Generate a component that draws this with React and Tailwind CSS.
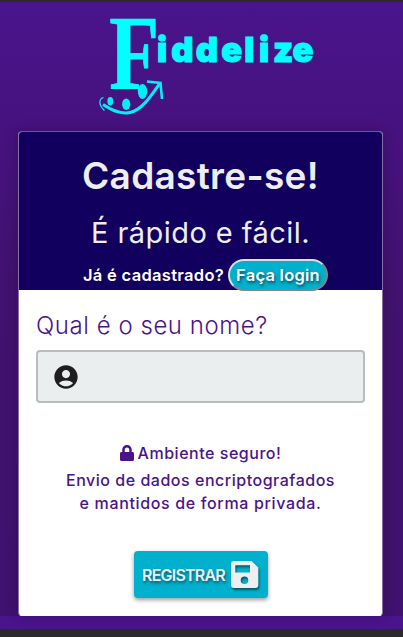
import React from 'react';
import { MdAccountCircle } from 'react-icons/md';
import { FaLock } from 'react-icons/fa';

function Logo() {
  return (
    <svg className="block h-[132px] w-full shrink-0 overflow-visible" viewBox="0 0 403 132" fill="#00ffff">
      <text
        transform="translate(109.3 89.4) scale(.77 1)"
        fontFamily="Liberation Serif"
        fontWeight="700"
        fontSize="106"
        stroke="#00ffff"
        strokeWidth=".8"
      >
        F
      </text>
      <text
        x="157 171.3 195.8 221.2 244.2 259 273 292.5"
        y="61.5"
        fontFamily="Inter, sans-serif"
        fontWeight="900"
        fontSize="34.5"
        stroke="#00ffff"
        strokeWidth="1"
      >
        iddelize
      </text>
      <g fill="#04eef5">
        <ellipse cx="110.3" cy="101.3" rx="2.9" ry="4.2" />
        <ellipse cx="126.2" cy="104.2" rx="4.1" ry="5.8" />
        <ellipse cx="142.5" cy="91.5" rx="4.7" ry="7.4" />
        <path d="M103 104.5C113 111 121 114.5 130 112.5C142 110 151 96 160 83" fill="none" stroke="#04eef5" strokeWidth="3" />
        <path d="M147 81.5L160.5 83L162 99" fill="none" stroke="#04eef5" strokeWidth="2.6" />
        <path d="M103.5 97.5C98.5 99 98.5 105 104.5 110.5" fill="none" stroke="#04eef5" strokeWidth="1.3" />
      </g>
    </svg>
  );
}

function SaveIcon() {
  return (
    <svg
      className="ml-[5px] h-[27px] w-[28px] drop-shadow-[1px_2px_1px_rgba(0,0,0,.5)]"
      viewBox="0 0 28 27"
      fill="#eceff1"
      fillRule="evenodd"
    >
      <path d="M3 0H20.5L27.3 6.5V24Q27.3 27 24.3 27H3Q0 27 0 24V3Q0 0 3 0ZM4.3 4.3V11.5H19V4.3ZM13.5 15.5A3.8 3.8 0 1 0 13.5 23.1A3.8 3.8 0 1 0 13.5 15.5Z" />
    </svg>
  );
}

export default function App() {
  return (
    <div className="flex h-[637px] w-[403px] flex-col border-t-2 border-[#2b2b2b] bg-[#2b2b2b] font-['Inter',sans-serif]">
      <div className="flex h-[627px] shrink-0 flex-col bg-[linear-gradient(180deg,#4a148c_0%,#46127f_20%,#41126f_45%,#3e126e_97.9%,#4a148c_98%)]">
        <div className="-mt-[2px]">
          <Logo />
        </div>
        <main className="ml-[18px] -mt-px flex h-[485px] w-[365px] flex-col overflow-hidden rounded-[4px] border border-x-[#8373a5] border-b-white border-t-[#6d5599] bg-white shadow-[0_0_12px_rgba(30,10,60,.35)]">
          <header className="flex h-[158px] shrink-0 flex-col items-center bg-[#12005e] text-[#eceff1]">
            <h1 className="mt-[21px] h-[46px] whitespace-nowrap text-[37px] font-semibold leading-[46px] tracking-[0.3px]">
              Cadastre-se!
            </h1>
            <h2 className="mt-[14px] h-[40px] whitespace-nowrap text-[29px] leading-[40px] tracking-[0.45px]">É rápido e fácil.</h2>
            <div className="mt-[6px] flex items-center whitespace-nowrap pl-[10px] text-[16.5px] font-semibold text-white">
              <span className="w-[142px] tracking-[0.3px]">Já é cadastrado?</span>
              <button className="ml-[3px] h-[32px] w-[100px] rounded-full border-2 border-[#e0e0e0] border-b-[#858585] border-r-[#858585] bg-[#00b0cc] tracking-[0.25px] [text-shadow:1px_2px_3px_#004b5c]">
                Faça login
              </button>
            </div>
          </header>
          <section className="flex flex-col px-[17px]">
            <label className="mt-[18px] h-[35px] whitespace-nowrap text-[24px] font-light leading-[35px] tracking-[0.55px] text-[#4a148c]">
              Qual é o seu nome?
            </label>
            <div className="mt-[7px] flex h-[53px] items-center rounded-[4px] border-2 border-[#b9bdbe] bg-[#eaeeef] pl-[14px]">
              <MdAccountCircle className="size-[28px] text-[#1e1e1e]" />
            </div>
            <div className="mt-[38px] flex h-[24px] items-center justify-center gap-[4px] text-[16px] font-medium text-[#4a148c]">
              <FaLock className="h-[16px] w-[14px]" />
              <span className="tracking-[0.53px]">Ambiente seguro!</span>
            </div>
            <p className="mt-[4px] whitespace-nowrap text-center text-[16px] font-medium leading-[23px] tracking-[0.52px] text-[#4a148c]">
              Envio de dados encriptografados
              <br />
              <span className="tracking-[0.65px]">e mantidos de forma privada.</span>
            </p>
            <button className="mt-[36px] flex h-[47px] w-[134px] items-center self-center rounded-[4px] bg-[#00b0cc] pl-[8px] text-[16px] font-semibold text-[#eceff1] shadow-[0_2px_4px_rgba(0,0,0,.4)] [text-shadow:1px_2px_3px_#00596b]">
              <span className="w-[84px] whitespace-nowrap tracking-[-0.8px]">REGISTRAR</span>
              <SaveIcon />
            </button>
          </section>
        </main>
      </div>
    </div>
  );
}
